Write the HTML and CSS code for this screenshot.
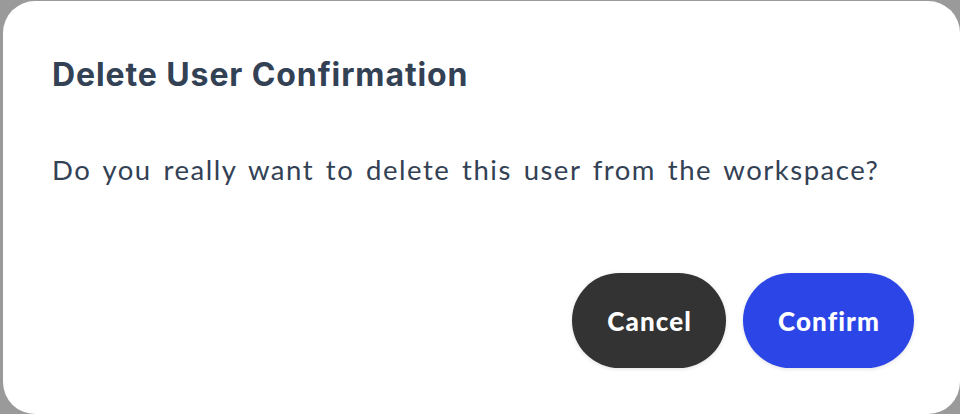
FILE: index.html
```html
<!DOCTYPE html>
<html lang="en">
<head>
    <meta charset="UTF-8">
    <meta name="viewport" content="width=device-width, initial-scale=1.0">
    <title>Delete User</title>
    <link rel="stylesheet" href="styles.css">
</head>
<body>

    <!-- confirmation dialog -->
    <div class="dialog">
        <h2 class="dialog-title">Delete User Confirmation</h2>
        <p class="dialog-text">Do you really want to delete this user from the workspace?</p>

        <div class="dialog-footer">
            <button class="btn btn-cancel">Cancel</button>
            <button class="btn btn-confirm">Confirm</button>
        </div>
    </div>

</body>
</html>
```

FILE: styles.css
```css
/* page */
body {
    margin: 0;
    padding: 0;
    background-color: #9a9a9a;
    height: 414px;
    overflow: hidden;
}
.dialog {
    box-sizing: border-box;
    margin: 1px 0 0 3px;
    width: 957px;
    height: 413px;
    background-color: #fff;
    border-radius: 32px;
    padding: 54px 46px 46px 49px;
    display: flex;
    flex-direction: column;
}
.dialog-title {
    margin: 0;
    font-family: Inter, "Liberation Sans", sans-serif;
    font-size: 32px;
    font-weight: 700;
    line-height: 40px;
    letter-spacing: 0.9px;
    color: #334155;
}
.dialog-text {
    margin: 57px 0 0;
    font-family: Lato, "Open Sans", sans-serif;
    font-size: 27.5px;
    line-height: 36px;
    letter-spacing: 1.5px;
    word-spacing: 3.3px;
    color: #334155;
}
.dialog-footer {
    margin-top: auto;
    display: flex;
    justify-content: flex-end;
    gap: 17px;
}
.btn {
    height: 95px;
    padding: 0 34px 0 35px;
    border: none;
    border-radius: 48px;
    font-family: Lato, "Open Sans", sans-serif;
    font-size: 26px;
    font-weight: 900;
    letter-spacing: 1.1px;
    color: #fff;
    cursor: pointer;
    box-shadow: 0 1px 4px rgba(0, 0, 0, 0.12);
}
.btn-cancel {
    background-color: #333333;
}
.btn-confirm {
    background-color: #2c45e6;
}
```
